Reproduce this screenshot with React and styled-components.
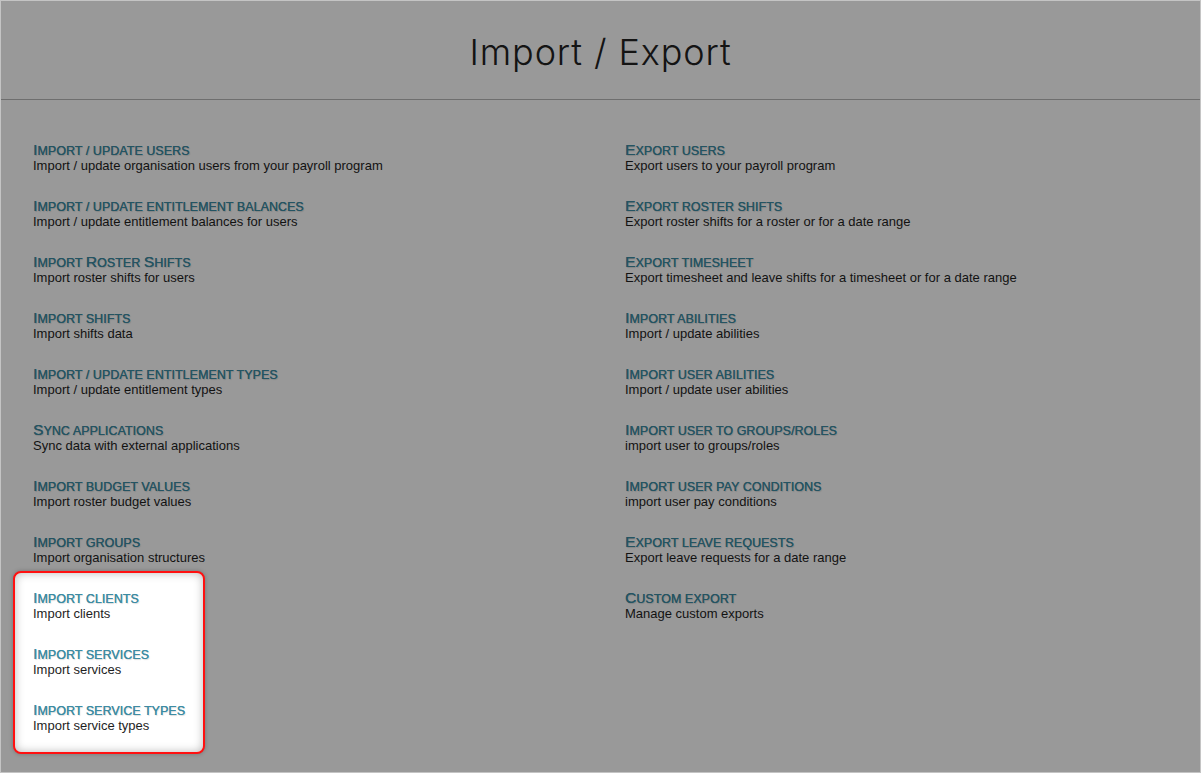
import React from "react";
import styled, { createGlobalStyle } from "styled-components";

const Global = createGlobalStyle`
  html, body { margin: 0; padding: 0; background: #fff; }
  body { font-family: "Liberation Sans", Arial, sans-serif; }
`;

const Page = styled.div`
  box-sizing: border-box;
  width: 1201px;
  height: 773px;
  border: 1px solid #c4c4c4;
  background: #fff;
  position: relative;
  overflow: hidden;
`;

const Header = styled.header`
  height: 98px;
  border-bottom: 1px solid #b8b8b8;
  display: flex;
  align-items: center;
  justify-content: center;
`;

const Title = styled.h1`
  margin: 0;
  padding-top: 4px;
  font-family: Inter, "Noto Sans", sans-serif;
  font-weight: 300;
  font-size: 36px;
  letter-spacing: 0.9px;
  color: #222;
`;

const Columns = styled.main`
  display: grid;
  grid-template-columns: 592px 1fr;
  padding: 42px 0 0 32px;
`;

const Column = styled.div`
  display: flex;
  flex-direction: column;
  gap: 25px;
`;

const Item = styled.div`
  display: flex;
  flex-direction: column;
`;

const ItemTitle = styled.a`
  display: block;
  height: 16px;
  font-family: "Liberation Sans", Arial, sans-serif;
  font-size: 15.5px;
  line-height: 16px;
  color: #3d8ca3;
  text-decoration: none;
  letter-spacing: 0.1px;
  text-shadow: 0.2px 0 0 currentColor, 1px 1px 1px rgba(0, 0, 0, 0.15);
  cursor: pointer;
  white-space: nowrap;
`;

const Low = styled.span`
  font-size: 0.8em;
  line-height: 1;
  text-transform: uppercase;
`;

const ItemDesc = styled.div`
  font-size: 13px;
  line-height: 15px;
  color: #1e1e1e;
`;

const Overlay = styled.div`
  position: absolute;
  inset: 0;
  background: rgba(0, 0, 0, 0.4);
  z-index: 1;
`;

const Spotlight = styled.div`
  position: relative;
  z-index: 2;
  box-sizing: border-box;
  width: 192px;
  margin: -19px 0 0 -20px;
  padding: 17px 18px 19px 18px;
  border: 2px solid #ff1010;
  border-radius: 8px;
  background: #fff;
  box-shadow: inset 0 0 10px rgba(0, 0, 0, 0.28), 0 0 4px rgba(0, 0, 0, 0.25);
  display: flex;
  flex-direction: column;
  gap: 25px;
`;

const left = [
  ["Import / update users", "Import / update organisation users from your payroll program"],
  ["Import / update entitlement balances", "Import / update entitlement balances for users"],
  ["Import Roster Shifts", "Import roster shifts for users"],
  ["Import shifts", "Import shifts data"],
  ["Import / update entitlement types", "Import / update entitlement types"],
  ["Sync applications", "Sync data with external applications"],
  ["Import budget values", "Import roster budget values"],
  ["Import groups", "Import organisation structures"],
];

const highlighted = [
  ["Import clients", "Import clients"],
  ["Import services", "Import services"],
  ["Import service types", "Import service types"],
];

const right = [
  ["Export users", "Export users to your payroll program"],
  ["Export roster shifts", "Export roster shifts for a roster or for a date range"],
  ["Export timesheet", "Export timesheet and leave shifts for a timesheet or for a date range"],
  ["Import abilities", "Import / update abilities"],
  ["Import user abilities", "Import / update user abilities"],
  ["Import user to groups/roles", "import user to groups/roles"],
  ["Import user pay conditions", "import user pay conditions"],
  ["Export leave requests", "Export leave requests for a date range"],
  ["Custom export", "Manage custom exports"],
];

// Capitals stay full size, everything else is shown as small capitals.
const SmallCaps = ({ text }) => {
  const runs = text.match(/[A-Z]+|[^A-Z]+/g) || [];
  return runs.map((r, i) =>
    /^[A-Z]+$/.test(r) ? <React.Fragment key={i}>{r}</React.Fragment> : <Low key={i}>{r}</Low>
  );
};

const Entry = ({ title, desc }) => (
  <Item>
    <ItemTitle>
      <SmallCaps text={title} />
    </ItemTitle>
    <ItemDesc>{desc}</ItemDesc>
  </Item>
);

export default function App() {
  return (
    <>
      <Global />
      <Page>
        <Header>
          <Title>Import / Export</Title>
        </Header>
        <Columns>
          <Column>
            {left.map(([t, d]) => (
              <Entry key={t} title={t} desc={d} />
            ))}
            <Spotlight>
              {highlighted.map(([t, d]) => (
                <Entry key={t} title={t} desc={d} />
              ))}
            </Spotlight>
          </Column>
          <Column>
            {right.map(([t, d]) => (
              <Entry key={t} title={t} desc={d} />
            ))}
          </Column>
        </Columns>
        <Overlay />
      </Page>
    </>
  );
}
